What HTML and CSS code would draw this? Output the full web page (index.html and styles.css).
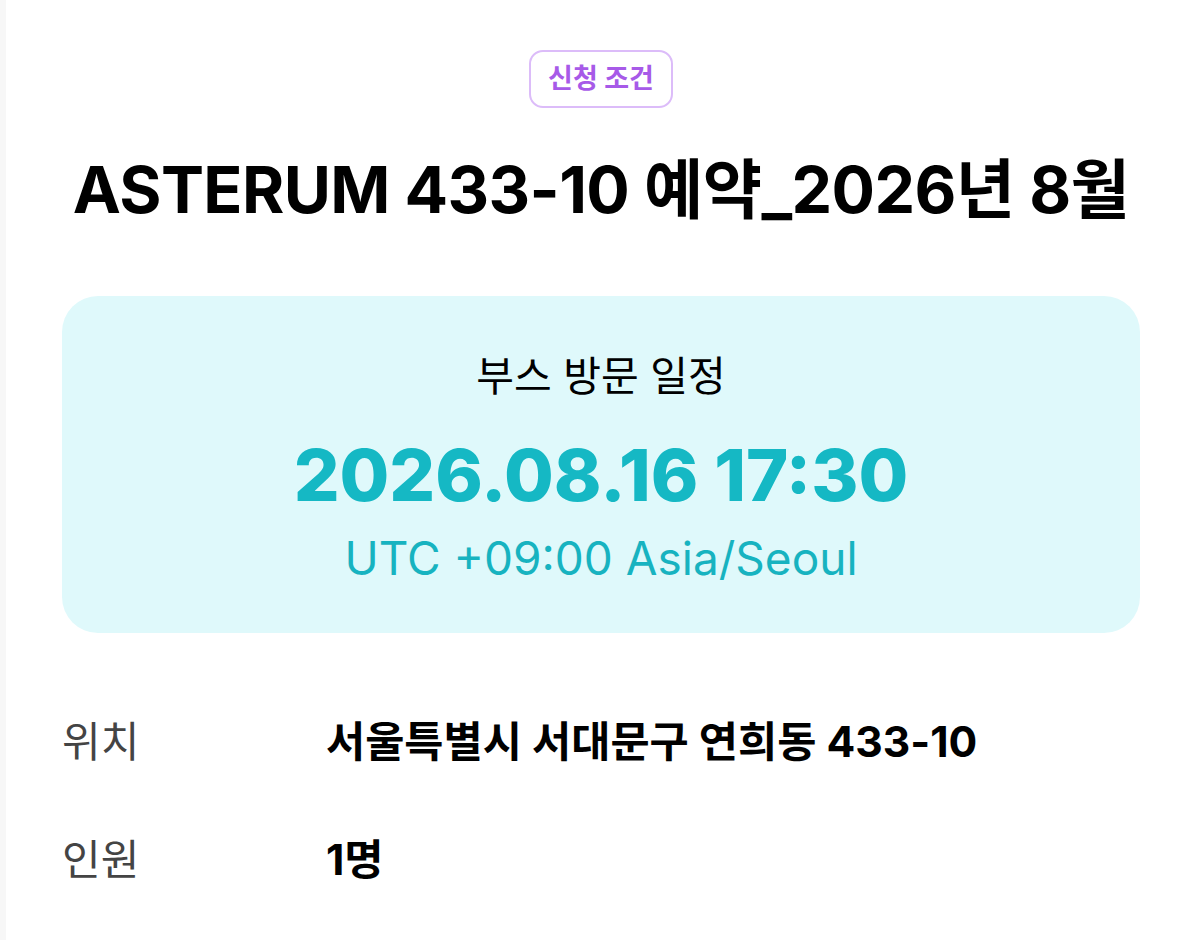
FILE: index.html
```html
<!DOCTYPE html>
<html lang="ko">
<head>
  <meta charset="UTF-8" />
  <meta name="viewport" content="width=device-width, initial-scale=1.0"/>
  <title>ASTERUM 433-10 예약</title>
  <link rel="stylesheet" href="styles.css">
</head>
<body>
  <div class="page">
    <div class="badge-wrap">
      <span class="badge">신청 조건</span>
    </div>

    <h1 class="title">ASTERUM 433-10 예약_2026년 8월</h1>

    <div class="schedule">
      <div class="schedule-label">부스 방문 일정</div>
      <div class="schedule-date">2026.08.16 17:30</div>
      <div class="schedule-tz">UTC +09:00 Asia/Seoul</div>
    </div>

    <div class="info">
      <div class="info-row">
        <span class="info-key">위치</span>
        <span class="info-value">서울특별시 서대문구 연희동 433-10</span>
      </div>
      <div class="info-row">
        <span class="info-key">인원</span>
        <span class="info-value">1명</span>
      </div>
    </div>
  </div>
</body>
</html>
```

FILE: styles.css
```css
* { box-sizing: border-box; }
body {
  margin: 0;
  background-color: #fff;
  font-family: Inter, "Noto Sans CJK KR", sans-serif;
  color: #000;
}
.page {
  min-height: 940px;
  padding: 50px 60px 0 56px;
  border-left: 6px solid #f7f7f7;
}
.badge-wrap {
  display: flex;
  justify-content: center;
}
.badge {
  display: inline-block;
  padding: 8px 17px;
  border: 2px solid #dcbcf9;
  border-radius: 14px;
  color: #a75ae8;
  font-size: 27px;
  font-weight: 700;
  line-height: 38px;
}
.title {
  margin: 42px 0 0;
  text-align: center;
  font-size: 64.5px;
  font-weight: 700;
  line-height: 80px;
  letter-spacing: -0.6px;
}
.schedule {
  margin-top: 66px;
  background-color: #dff9fb;
  border-radius: 36px;
  padding: 52px 0 45px;
  text-align: center;
}
.schedule-label {
  font-size: 41px;
  line-height: 56px;
}
.schedule-date {
  margin-top: 31px;
  font-size: 72px;
  font-weight: 800;
  line-height: 80px;
  color: #15b8c4;
}
.schedule-tz {
  margin-top: 13px;
  font-size: 46px;
  line-height: 60px;
  color: #17b3c0;
}
.info {
  margin-top: 79px;
  display: flex;
  flex-direction: column;
  gap: 58px;
}
.info-row {
  display: flex;
  align-items: center;
  font-size: 42px;
  line-height: 60px;
}
.info-key {
  width: 264px;
  color: #444;
}
.info-value {
  font-size: 42.6px;
  font-weight: 700;
}
```
